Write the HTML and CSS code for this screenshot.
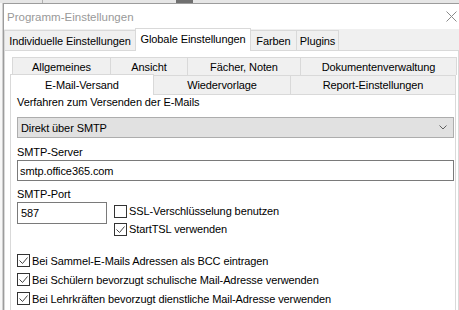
FILE: index.html
```html
<!DOCTYPE html>
<html lang="de">

<head>
    <meta charset="UTF-8" />
    <title>Programm-Einstellungen</title>
    <link rel="stylesheet" href="styles.css">
</head>

<body>
    <div class="behind-top">
        <span class="sep"></span>
        <span class="btn"></span>
    </div>

    <div class="stage">
        <div class="behind-left"></div>

        <div class="window">
            <div class="titlebar">
                <span class="title">Programm-Einstellungen</span>
                <svg class="close" width="11" height="11" viewBox="0 0 11 11">
                    <path d="M0.5 0.5 L10.5 10.5 M10.5 0.5 L0.5 10.5" stroke="#8a8a8a" stroke-width="1" fill="none" />
                </svg>
            </div>

            <div class="dialog">
                <div class="tabstrip">
                    <div class="tab" style="width: 132px;">Individuelle Einstellungen</div>
                    <div class="tab active" style="width: 116px;">Globale Einstellungen</div>
                    <div class="tab" style="width: 47px;">Farben</div>
                    <div class="tab" style="width: 43px;">Plugins</div>
                </div>

                <div class="tab-page">
                    <div class="subtabs back">
                        <div class="subtab" style="width: 99px;">Allgemeines</div>
                        <div class="subtab" style="width: 78px;">Ansicht</div>
                        <div class="subtab" style="width: 114px;">Fächer, Noten</div>
                        <div class="subtab" style="width: 157px;">Dokumentenverwaltung</div>
                    </div>
                    <div class="subtabs front">
                        <div class="subtab active" style="width: 144px;">E-Mail-Versand</div>
                        <div class="subtab" style="width: 138px;">Wiedervorlage</div>
                        <div class="subtab" style="width: 166px;">Report-Einstellungen</div>
                    </div>

                    <div class="panel">
                        <div class="label first">Verfahren zum Versenden der E-Mails</div>
                        <div class="select">
                            <span>Direkt über SMTP</span>
                            <svg width="8" height="5" viewBox="0 0 8 5">
                                <path d="M0.5 0.5 L4 4 L7.5 0.5" stroke="#606060" stroke-width="1" fill="none" />
                            </svg>
                        </div>

                        <div class="label">SMTP-Server</div>
                        <div class="input">smtp.office365.com</div>

                        <div class="label short">SMTP-Port</div>
                        <div class="port-row">
                            <div class="input port">587</div>
                            <div class="checks-col">
                                <label class="check">
                                    <svg width="13" height="13" viewBox="0 0 13 13">
                                        <rect x="0.5" y="0.5" width="12" height="12" fill="#fff" stroke="#333" />
                                    </svg>
                                    SSL-Verschlüsselung benutzen
                                </label>
                                <label class="check">
                                    <svg width="13" height="13" viewBox="0 0 13 13">
                                        <rect x="0.5" y="0.5" width="12" height="12" fill="#fff" stroke="#333" />
                                        <path d="M2.5 6.5 L5.5 9.5 L10.5 3.5" stroke="#444" fill="none" />
                                    </svg>
                                    StartTSL verwenden
                                </label>
                            </div>
                        </div>

                        <div class="check-list">
                            <label class="check">
                                <svg width="13" height="13" viewBox="0 0 13 13">
                                    <rect x="0.5" y="0.5" width="12" height="12" fill="#fff" stroke="#333" />
                                    <path d="M2.5 6.5 L5.5 9.5 L10.5 3.5" stroke="#444" fill="none" />
                                </svg>
                                Bei Sammel-E-Mails Adressen als BCC eintragen
                            </label>
                            <label class="check">
                                <svg width="13" height="13" viewBox="0 0 13 13">
                                    <rect x="0.5" y="0.5" width="12" height="12" fill="#fff" stroke="#333" />
                                    <path d="M2.5 6.5 L5.5 9.5 L10.5 3.5" stroke="#444" fill="none" />
                                </svg>
                                Bei Schülern bevorzugt schulische Mail-Adresse verwenden
                            </label>
                            <label class="check">
                                <svg width="13" height="13" viewBox="0 0 13 13">
                                    <rect x="0.5" y="0.5" width="12" height="12" fill="#fff" stroke="#333" />
                                    <path d="M2.5 6.5 L5.5 9.5 L10.5 3.5" stroke="#444" fill="none" />
                                </svg>
                                Bei Lehrkräften bevorzugt dienstliche Mail-Adresse verwenden
                            </label>
                        </div>
                    </div>
                </div>
            </div>
        </div>
    </div>
</body>

</html>
```

FILE: styles.css
```css
body {
    margin: 0;
    height: 310px;
    overflow: hidden;
    font-family: "Liberation Sans", Arial, sans-serif;
    font-size: 11px;
    letter-spacing: -0.1px;
    color: #000;
    background-color: #f4f4f4;
}

/* window behind the dialog */
.behind-top {
    height: 3px;
    display: flex;
    background-color: #e6e6e6;
}

.behind-top .sep {
    width: 1px;
    margin-left: 42px;
    background-color: #b0b0b0;
}

.behind-top .btn {
    width: 17px;
    margin-left: 133px;
    background-color: #707070;
}

.stage {
    display: flex;
    height: 307px;
    overflow: hidden;
}

.behind-left {
    width: 3px;
    flex-shrink: 0;
    background-color: #f7f7f7;
    border-right: 1px solid #d0d0d0;
    box-sizing: border-box;
}

/* dialog */
.window {
    flex: 1;
    min-width: 0;
    display: flex;
    flex-direction: column;
    overflow: hidden;
    background: #fff;
    border-top: 1px solid #9c9c9c;
    border-left: 1px solid #9c9c9c;
}

.titlebar {
    height: 25px;
    flex-shrink: 0;
    display: flex;
    align-items: center;
    justify-content: space-between;
    padding: 0 2px 0 3px;
}

.title {
    font-size: 11.5px;
    letter-spacing: 0;
    color: #999;
}

.dialog {
    flex: 1;
    min-height: 0;
    display: flex;
    flex-direction: column;
    padding-top: 1px;
    background-color: #f0f0f0;
}

.tabstrip {
    height: 20px;
    flex-shrink: 0;
    display: flex;
    align-items: flex-end;
    position: relative;
    z-index: 1;
}

.tab {
    height: 20px;
    box-sizing: border-box;
    display: flex;
    align-items: center;
    justify-content: center;
    border: 1px solid #d9d9d9;
    border-bottom: none;
    background-color: #f0f0f0;
}

.tab + .tab {
    margin-left: -1px;
}

.tab.active {
    height: 23px;
    margin-bottom: -1px;
    background: #fff;
    padding-bottom: 2px;
}

.tab-page {
    flex: 1;
    flex-shrink: 0;
    background: #fff;
    border: 1px solid #d9d9d9;
    padding: 6px 0 0 5px;
}

.subtabs {
    display: flex;
}

.subtabs.back {
    margin-left: 2px;
}

.subtab {
    box-sizing: border-box;
    display: flex;
    align-items: center;
    justify-content: center;
    border: 1px solid #d9d9d9;
    border-bottom: none;
    background-color: #f0f0f0;
}

.subtab + .subtab {
    margin-left: -1px;
}

.back .subtab {
    height: 18px;
}

.subtabs.front {
    height: 19px;
    align-items: flex-end;
    position: relative;
    z-index: 1;
}

.front .subtab {
    height: 19px;
}

.front .subtab.active {
    height: 21px;
    margin-bottom: -1px;
    background: #fff;
}

.panel {
    width: 446px;
    height: 220px;
    box-sizing: border-box;
    border: 1px solid #d9d9d9;
    background: #fff;
    padding: 0 1px 0 6px;
}

.label {
    line-height: 16px;
    margin-top: 6px;
}

.label.first {
    margin-top: -1px;
}

.label.short {
    line-height: 15px;
}

.select {
    height: 21px;
    margin-top: 7px;
    box-sizing: border-box;
    display: flex;
    align-items: center;
    justify-content: space-between;
    padding: 0 6px 0 3px;
    border: 1px solid #adadad;
    background-color: #e1e1e1;
}

.input {
    height: 21px;
    box-sizing: border-box;
    display: flex;
    align-items: center;
    padding-left: 2px;
    border: 1px solid #7a7a7a;
}

.port-row {
    display: flex;
    gap: 7px;
}

.input.port {
    width: 90px;
    height: 22px;
    padding-left: 3px;
}

.checks-col {
    display: flex;
    flex-direction: column;
}

.check {
    height: 18px;
    display: flex;
    align-items: center;
    gap: 2px;
}

.check-list {
    margin-top: 13px;
}

.check-list .check {
    height: 19px;
}
```
